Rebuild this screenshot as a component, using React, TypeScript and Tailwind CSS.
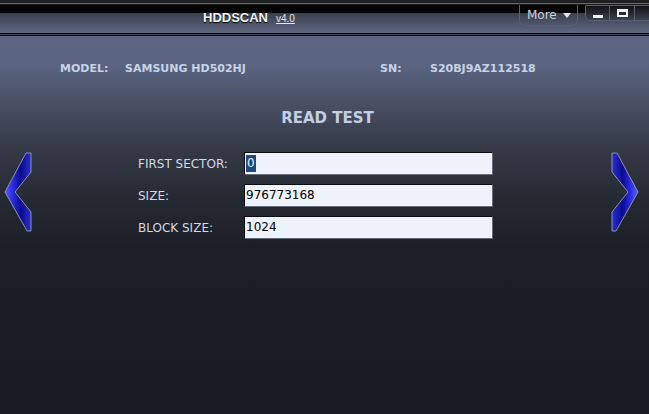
import React from 'react';

const Chevron: React.FC<{ flip?: boolean; id: string }> = ({ flip, id }) => (
  <svg width="28" height="81" viewBox="0 0 28 81" className={flip ? '-scale-x-100' : ''}>
    <defs>
      <linearGradient id={id} x1="0" y1="0" x2="1" y2="0">
        <stop offset="0" stopColor="#5a5cff" />
        <stop offset="0.3" stopColor="#2a2ce6" />
        <stop offset="0.6" stopColor="#0a0a8c" />
        <stop offset="1" stopColor="#2c2ed4" />
      </linearGradient>
    </defs>
    <polygon
      points="22,1 27,1 27,20 11,40 27,60 27,79 23,79 1,40"
      fill={`url(#${id})`}
      stroke="#8e90a6"
      strokeWidth="1"
      strokeLinejoin="round"
    />
  </svg>
);

const Field: React.FC<{ label: string; value: string; selected?: boolean }> = ({ label, value, selected }) => (
  <div className="flex items-center h-[23px]">
    <span className="w-[106px] text-[12px] text-[#d3d9e6]">{label}</span>
    <div className="w-[249px] h-[23px] bg-[#eef2fa] border-t border-l border-[#0b0c10] border-r border-b border-r-[#666c7c] border-b-[#666c7c] flex items-center pl-px">
      {selected ? (
        <span className="bg-[#1e4a82] text-[#e8eef8] text-[12px] leading-[17px] px-px">{value}</span>
      ) : (
        <span className="text-black text-[12px] leading-[17px]">{value}</span>
      )}
    </div>
  </div>
);

export default function App() {
  return (
    <div className="w-[649px] h-[414px] overflow-hidden flex flex-col font-['DejaVu_Sans',sans-serif] bg-[#1a1c24]">
      {/* title bar */}
      <div className="h-[36px] shrink-0 flex bg-[linear-gradient(to_bottom,#222326_0px,#1c1c1e_3px,#74742a_3px,#74742a_4px,#1a1a1a_4px,#1a1a1a_5px,#060606_5px,#060606_13px,#3a3f4d_13px,#5f6781_33px,#08090c_33px,#08090c_34px,#3c4252_34px,#3c4252_35px,#0c0d10_35px,#0c0d10_36px)]">
        <div className="w-[519px] shrink-0 pl-[203px] pt-[11px] flex items-baseline">
          <span className="font-['Liberation_Sans_Narrow','Liberation_Sans',sans-serif] font-bold text-[13px] leading-[14px] text-[#f2f2f2] [text-shadow:0_1px_1px_#000]">
            HDDSCAN
          </span>
          <span className="ml-[8px] font-['Liberation_Sans',sans-serif] text-[10px] text-[#e6e6e6] underline">v4.0</span>
        </div>
        <div className="mt-[5px] h-[21px] w-[59px] shrink-0 border-x border-b border-[#596072] rounded-b-[6px] flex items-center pl-[7px] gap-[6px]">
          <span className="text-[12px] text-[#cdd0d6] leading-none">More</span>
          <svg width="8" height="5" viewBox="0 0 8 5">
            <polygon points="0,0 8,0 4,5" fill="#e4e4e4" />
          </svg>
        </div>
        <div className="ml-[7px] mt-[5px] flex shrink-0">
          <div className="w-[25px] h-[16px] border border-[#596072] rounded-bl-[5px] bg-[linear-gradient(to_bottom,#121317,#3c4150)] flex items-end justify-center pb-[2px]">
            <div className="w-[10px] h-[3px] bg-[#f4f4f4]" />
          </div>
          <div className="w-[25px] h-[16px] border-y border-r border-[#596072] bg-[linear-gradient(to_bottom,#121317,#3c4150)] flex items-start justify-center pt-[3px]">
            <div className="w-[11px] h-[8px] border-2 border-t-[3px] border-[#f4f4f4]" />
          </div>
          <div className="w-[25px] h-[16px] border-y border-r border-[#596072] bg-[linear-gradient(to_bottom,#121317,#3c4150)]" />
        </div>
      </div>

      {/* body */}
      <div className="flex-1 flex flex-col bg-[linear-gradient(to_bottom,#5c6682_0px,#5a6480_30px,#4b5266_64px,#343946_114px,#252932_164px,#1b1e26_214px,#1a1c24_378px)]">
        <div className="pt-[26px] flex text-[11px] leading-[14px] font-bold text-[#c7d3e7]">
          <span className="ml-[60px] w-[65px]">MODEL:</span>
          <span className="w-[255px]">SAMSUNG HD502HJ</span>
          <span className="w-[50px]">SN:</span>
          <span>S20BJ9AZ112518</span>
        </div>

        <div className="mt-[33px] pl-[6px] text-center text-[15px] leading-[18px] font-bold text-[#c3cfe3]">
          READ TEST
        </div>

        <div className="mt-[25px] flex items-start pl-[4px]">
          <Chevron id="chevL" />
          <div className="ml-[106px] flex flex-col gap-[9px]">
            <Field label="FIRST SECTOR:" value="0" selected />
            <Field label="SIZE:" value="976773168" />
            <Field label="BLOCK SIZE:" value="1024" />
          </div>
          <div className="ml-[118px]">
            <Chevron id="chevR" flip />
          </div>
        </div>
      </div>
    </div>
  );
}
